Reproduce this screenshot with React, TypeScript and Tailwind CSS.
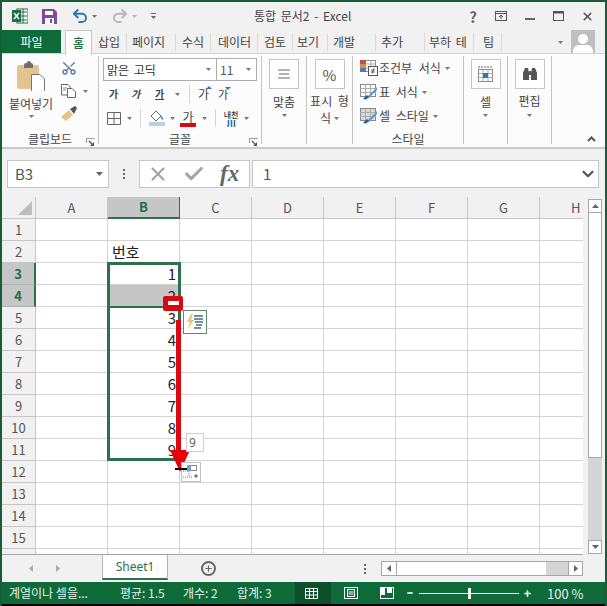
import React from "react";
import { Undo2, Redo2, Scissors, X, Check, ChevronDown, Minus, Plus } from "lucide-react";

const Caret = ({ c = "#666", w = 7, h = 4 }: { c?: string; w?: number; h?: number }) => (
  <svg width={w} height={h} viewBox="0 0 7 4" className="shrink-0"><polygon points="0,0 7,0 3.5,4" fill={c} /></svg>
);

const Launcher = () => (
  <svg width="9" height="9" viewBox="0 0 9 9" className="shrink-0">
    <path d="M0.5 5V0.5H8.5" fill="none" stroke="#999" />
    <path d="M3 3L7 7" stroke="#555" strokeWidth="1.2" />
    <path d="M8 4V8H4Z" fill="#555" />
  </svg>
);

const Group = ({ w, label, launcher, children }: { w: string; label?: string; launcher?: boolean; children: React.ReactNode }) => (
  <div className={`flex flex-col shrink-0 h-[88px] border-r border-[#c6c6c6] ${w}`}>
    <div className="h-[74px] flex shrink-0">{children}</div>
    <div className="flex h-[18px] shrink-0 items-center relative">
      <span className="flex-1 text-center text-[#444]">{label}</span>
      {launcher && <span className="absolute right-[3px] top-[8px]"><Launcher /></span>}
    </div>
  </div>
);

const BigBtn = ({ children }: { children: React.ReactNode }) => (
  <div className="w-[30px] h-[30px] bg-white border border-[#c6c6c6] flex items-center justify-center">{children}</div>
);

const LinesIcon = () => (
  <svg width="14" height="10" viewBox="0 0 14 10"><path d="M1 1H13M2 5H12M1 9H13" stroke="#666" strokeWidth="1" /></svg>
);

const StyleIcon = ({ n }: { n: number }) => (
  <svg width="18" height="16" viewBox="0 0 18 16" className="shrink-0">
    {n === 0 ? (
      <>
        <rect x="0.5" y="0.5" width="15" height="11" fill="#fff" stroke="#888" />
        <rect x="0" y="0" width="6" height="4" fill="#c0504d" />
        <rect x="0" y="4" width="6" height="4" fill="#e08a3c" />
        <rect x="0" y="8" width="6" height="4" fill="#4a7ebb" />
        <path d="M6 4H16M6 8H16M11 0V12" stroke="#aaa" />
        <rect x="8.5" y="6.5" width="9" height="9" fill="#fff" stroke="#555" />
        <path d="M11 10H15M11 12H15M14 8.5L12 13.5" stroke="#444" strokeWidth="0.8" />
      </>
    ) : (
      <>
        <rect x="0.5" y="0.5" width="15" height="12" fill={n === 1 ? "#fff" : "#d9d9d9"} stroke="#888" />
        <path d="M0 4.5H16M0 8.5H16M5.5 0V12M10.5 0V12" stroke="#aaa" />
        <path d="M17 3L8 12L5 15L9 14L17 6Z" fill="#5b9bd5" />
        <path d="M3 15L7 11L9 13L6 15.5Z" fill="#1f5f9f" />
      </>
    )}
  </svg>
);

const colsDef = [
  ["A", "w-[72px]"], ["B", "w-[72px]"], ["C", "w-[72px]"], ["D", "w-[72px]"],
  ["E", "w-[72px]"], ["F", "w-[72px]"], ["G", "w-[72px]"], ["H", "w-[44px]"],
] as const;

const rows = Array.from({ length: 15 }, (_, i) => i + 1);
const valueOf = (r: number) => (r >= 3 && r <= 11 ? String(r - 2) : "");

const tabs: [string, string][] = [
  ["삽입", "w-[34px] pl-[5px]"], ["페이지", "w-[49px] pl-[5px]"], ["수식", "w-[35px] pl-[6px]"], ["데이터", "w-[47px] pl-[7px]"], ["검토", "w-[35px] pl-[6px]"],
  ["보기", "w-[35px] pl-[4px]"], ["개발", "w-[48px] pl-[5px]"], ["추가", "w-[49px] pl-[5px]"], ["부하 테", "w-[49px] pl-[4px]"], ["팀", "w-[28px] pl-[9px]"],
];

export default function App() {
  return (
    <div
      className="relative w-[607px] h-[606px] overflow-hidden bg-[#f1f1f1] text-[12px] text-[#444] flex flex-col border-t-2 border-x-2 border-[#1a5c38] leading-none"
      style={{ fontFamily: '"Noto Sans CJK KR", "Noto Sans", sans-serif' }}
    >
      {/* Title bar */}
      <div className="h-[28px] flex items-center shrink-0 relative">
        <div className="flex items-center pl-[10px] gap-[14px]">
          <svg width="16" height="16" viewBox="0 0 16 16">
            <rect x="5" y="1" width="11" height="14" fill="#fff" stroke="#1d6f42" />
            <path d="M8 4H15M8 8H15M8 12H15M11 1V15" stroke="#1d6f42" />
            <rect x="0" y="2" width="9" height="12" fill="#1d6f42" />
            <path d="M2 5L7 11M7 5L2 11" stroke="#fff" strokeWidth="1.4" />
          </svg>
          <svg width="15" height="15" viewBox="0 0 15 15">
            <path d="M0 0H12L15 3V15H0Z" fill="#7d4a9e" />
            <rect x="3" y="2" width="8" height="4" fill="#fff" />
            <rect x="3" y="9" width="9" height="6" fill="#fff" />
            <rect x="8" y="10" width="2" height="4" fill="#7d4a9e" />
          </svg>
          <span className="flex items-center gap-[3px]">
            <Undo2 size={18} strokeWidth={2.6} color="#2f74b5" />
            <Caret c="#777" w={5} h={3} />
          </span>
          <span className="flex items-center gap-[3px]">
            <Redo2 size={18} strokeWidth={2.6} color="#b8b8b8" />
            <Caret c="#bbb" w={5} h={3} />
          </span>
          <span className="flex flex-col items-center gap-[2px]">
            <span className="w-[5px] h-[1px] bg-[#666]" />
            <Caret c="#666" w={5} h={3} />
          </span>
        </div>
        <div className="absolute left-[252px] top-[8px] text-[12px] whitespace-nowrap text-[#444] [word-spacing:2px]">통합 문서2 - Excel</div>
        <div className="ml-auto flex items-center pr-[3px] text-[#666]">
          <span className="w-[28px] text-center text-[15px] font-bold">?</span>
          <span className="w-[28px] flex justify-center">
            <svg width="12" height="10" viewBox="0 0 12 10"><rect x="0.5" y="0.5" width="11" height="9" fill="none" stroke="#555" /><path d="M0 2.5H12" stroke="#555" /><path d="M6 8V4M4 6L6 4L8 6" fill="none" stroke="#555" /></svg>
          </span>
          <span className="w-[29px] flex justify-center"><span className="w-[10px] h-[2px] bg-[#666] mt-[5px]" /></span>
          <span className="w-[29px] flex justify-center">
            <svg width="11" height="10" viewBox="0 0 11 10"><rect x="0.5" y="0.5" width="10" height="9" fill="none" stroke="#555" /><path d="M0 1.5H11" stroke="#555" strokeWidth="2" /></svg>
          </span>
          <span className="w-[29px] flex justify-center"><X size={13} strokeWidth={3} color="#555" /></span>
        </div>
      </div>

      {/* Tabs */}
      <div className="h-[24px] flex items-stretch shrink-0 relative">
        <div className="w-[59px] bg-[#0f6a3a] text-white flex items-center justify-center text-[12px]">파일</div>
        <div className="w-[4px]" />
        <div className="w-[27px] h-[25px] bg-[#fcfcfc] border-x border-t border-[#c6c6c6] flex items-center justify-center text-[#1d6f42] z-10 font-medium">홈</div>
        <div className="w-[1px]" />
        {tabs.map(([t, w]) => (
          <div key={t} className={`flex items-center justify-start whitespace-nowrap ${w} border-r border-[#d8d8d8] my-[3px] [word-spacing:2px]`}>{t}</div>
        ))}
        <div className="ml-auto flex items-center gap-[8px] pr-[10px]">
          <Caret c="#777" w={5} h={3} />
          <div className="w-[24px] h-[24px] bg-[#bfbfbf] flex flex-col items-center justify-end overflow-hidden">
            <span className="w-[10px] h-[10px] rounded-full bg-white mb-[1px]" />
            <span className="w-[20px] h-[9px] bg-white rounded-t-[6px]" />
          </div>
        </div>
        <div className="absolute left-0 right-0 bottom-0 h-px bg-[#d4d4d4]" />
      </div>

      {/* Ribbon */}
      <div className="h-[95px] shrink-0 bg-[#fcfcfc] border-b-2 border-[#c9c9c9] flex pt-[2px] relative">
        <Group w="w-[97px]" label="클립보드" launcher>
          <div className="w-[58px] flex flex-col items-center pt-[5px]">
            <svg width="28" height="30" viewBox="0 0 28 30">
              <rect x="0" y="4" width="22" height="24" rx="2" fill="#e2c48e" />
              <path d="M7 4C7 2 9 2 10 2C10 0 12 0 12 0C13 0 14 1 14 2C16 2 16 3 16 4V7H7Z" fill="#6e6e6e" />
              <path d="M14.5 13.5H23L27.5 18V30.5H14.5Z" fill="#fff" stroke="#777" />
            </svg>
            <span className="mt-[7px] whitespace-nowrap">붙여넣기</span>
            <span className="mt-[5px]"><Caret c="#777" w={5} h={3} /></span>
          </div>
          <div className="flex flex-col pt-[4px] pl-[1px] gap-[8px]">
            <Scissors size={16} color="#5a7a9a" className="rotate-[-90deg]" />
            <div className="flex items-center gap-[5px]">
              <svg width="15" height="14" viewBox="0 0 15 14"><path d="M0.5 0.5H7L9 2.5V11H0.5Z" fill="#fff" stroke="#666" /><path d="M6.5 4.5H11L14.5 8V13.5H6.5Z" fill="#fff" stroke="#666" /><path d="M2 4H6M2 6H5" stroke="#888" /></svg>
              <span className="ml-[2px]"><Caret c="#777" w={5} h={3} /></span>
            </div>
            <svg width="16" height="15" viewBox="0 0 16 15"><path d="M0 11L8 4L12 9L5 15Z" fill="#e3c48d" /><path d="M9 3L13 8L16 2L14 0Z" fill="#555" /></svg>
          </div>
        </Group>

        <Group w="w-[163px]" label="글꼴" launcher>
          <div className="flex flex-col pl-[4px] pt-[2px]">
            <div className="flex h-[23px]">
              <div className="w-[114px] bg-white border border-[#ababab] flex items-center pl-[3px] pr-[5px] justify-between text-[#333]">
                <span className="text-[12px] [word-spacing:2px]">맑은 고딕</span><Caret c="#777" w={5} h={3} />
              </div>
              <div className="w-[40px] bg-white border border-l-0 border-[#ababab] flex items-center pl-[3px] pr-[5px] justify-between text-[#555]">
                <span>11</span><Caret c="#777" w={5} h={3} />
              </div>
            </div>
            <div className="flex items-center h-[22px] mt-[2px] text-[10px] font-bold text-[#444]">
              <span className="w-[10px] ml-[6px]">가</span>
              <span className="w-[10px] ml-[12px] italic">가</span>
              <span className="w-[10px] ml-[14px] underline">가</span>
              <span className="ml-[10px]"><Caret c="#777" w={5} h={3} /></span>
              <span className="w-px h-[18px] bg-[#d4d4d4] ml-[9px]" />
              <span className="relative ml-[8px] text-[12px] font-normal">가<span className="absolute -right-[3px] -top-[2px] w-0 h-0 border-x-[3px] border-x-transparent border-b-[3px] border-b-[#2f74b5]" /></span>
              <span className="relative ml-[9px] text-[11px] font-normal">가<span className="absolute -right-[3px] -top-[2px] w-0 h-0 border-x-[3px] border-x-transparent border-t-[3px] border-t-[#2f74b5]" /></span>
            </div>
            <div className="flex items-center h-[22px] mt-[2px]">
              <svg width="14" height="13" viewBox="0 0 14 13" className="ml-[4px]"><path d="M0.5 0.5H13.5V12.5H0.5ZM0.5 6.5H13.5M7 0.5V12.5" fill="none" stroke="#666" /></svg>
              <span className="ml-[6px]"><Caret c="#777" w={5} h={3} /></span>
              <span className="w-px h-[18px] bg-[#d4d4d4] ml-[8px]" />
              <svg width="16" height="16" viewBox="0 0 16 16" className="ml-[8px]"><path d="M2 6L7 1L12 6L7 11Z" fill="#fff" stroke="#666" /><path d="M11 5L14 8V10L12 8Z" fill="#2f74b5" /><rect x="0" y="12" width="16" height="4" fill="#b8cfe4" /></svg>
              <span className="ml-[5px]"><Caret c="#777" w={5} h={3} /></span>
              <span className="ml-[5px] flex flex-col items-center w-[16px] text-[12px] leading-[13px]">가<span className="w-[16px] h-[4px] bg-[#d90a0f]" /></span>
              <span className="ml-[6px]"><Caret c="#777" w={5} h={3} /></span>
              <span className="w-px h-[18px] bg-[#d4d4d4] ml-[8px]" />
              <span className="ml-[7px] flex flex-col items-center w-[16px] text-[8px] leading-[9px] text-[#333] font-medium gap-[1px]">
                내천
                <svg width="9" height="7" viewBox="0 0 9 7" className="shrink-0"><path d="M1.500 0V5L0.500 7M4.500 0V7M7.500 0V7" fill="none" stroke="#2f74b5" strokeWidth="1.600" /></svg>
              </span>
              <span className="ml-[5px]"><Caret c="#777" w={5} h={3} /></span>
            </div>
          </div>
        </Group>

        <Group w="w-[45px]">
          <div className="flex-1 flex flex-col items-center pt-[3px]">
            <BigBtn><LinesIcon /></BigBtn>
            <span className="mt-[7px]">맞춤</span>
            <span className="mt-[6px]"><Caret c="#777" w={5} h={3} /></span>
          </div>
        </Group>

        <Group w="w-[46px]">
          <div className="flex-1 flex flex-col items-center pt-[3px]">
            <BigBtn><span className="text-[15px] text-[#555]">%</span></BigBtn>
            <span className="mt-[6px] whitespace-nowrap [word-spacing:3px]">표시 형</span>
            <span className="mt-[5px] flex items-center gap-[3px]">식<Caret c="#777" w={5} h={3} /></span>
          </div>
        </Group>

        <Group w="w-[111px]" label="스타일">
          <div className="flex flex-col pl-[7px] pt-[3px] gap-[6px]">
            <div className="flex items-center gap-[1px] h-[18px] whitespace-nowrap [word-spacing:4px]"><StyleIcon n={0} />조건부 서식<span className="ml-[3px]"><Caret c="#777" w={5} h={3} /></span></div>
            <div className="flex items-center gap-[1px] h-[18px] whitespace-nowrap [word-spacing:3px]"><StyleIcon n={1} />표 서식<span className="ml-[3px]"><Caret c="#777" w={5} h={3} /></span></div>
            <div className="flex items-center gap-[1px] h-[18px] whitespace-nowrap [word-spacing:3px]"><StyleIcon n={2} />셀 스타일<span className="ml-[3px]"><Caret c="#777" w={5} h={3} /></span></div>
          </div>
        </Group>

        <Group w="w-[44px]">
          <div className="flex-1 flex flex-col items-center pt-[3px]">
            <BigBtn>
              <svg width="15" height="16" viewBox="0 0 15 16"><path d="M0 1H15" stroke="#666" strokeDasharray="2 1" /><rect x="0.5" y="3.5" width="14" height="12" fill="#fff" stroke="#888" /><path d="M0 7.5H15M0 11.5H15M5 3V16M10 3V16" stroke="#aaa" /><rect x="5" y="7" width="5" height="5" fill="#2f74b5" /></svg>
            </BigBtn>
            <span className="mt-[7px]">셀</span>
            <span className="mt-[6px]"><Caret c="#777" w={5} h={3} /></span>
          </div>
        </Group>

        <Group w="w-[44px]">
          <div className="flex-1 flex flex-col items-center pt-[3px]">
            <BigBtn>
              <svg width="16" height="14" viewBox="0 0 16 14"><path d="M1 6L3 1H6L7 6V13H1ZM9 6L10 1H13L15 6V13H9ZM7 4H9V8H7Z" fill="#555" /></svg>
            </BigBtn>
            <span className="mt-[6px]">편집</span>
            <span className="mt-[7px]"><Caret c="#777" w={5} h={3} /></span>
          </div>
        </Group>
        <span className="absolute right-[9px] bottom-[5px]">
          <svg width="9" height="6" viewBox="0 0 9 6"><path d="M1 5L4.500 1.500L8 5" fill="none" stroke="#555" strokeWidth="2" /></svg>
        </span>
      </div>

      {/* Formula bar */}
      <div className="h-[48px] shrink-0 flex items-center pl-[5px] pr-[6px] pt-[1px]">
        <div className="w-[102px] h-[28px] bg-white border border-[#c6c6c6] flex items-center justify-between pl-[7px] pr-[5px] text-[15px] text-[#555]">
          <span>B3</span><Caret c="#666" w={7} h={4} />
        </div>
        <div className="w-[30px] flex flex-col items-center gap-[2px]">
          <span className="w-[2px] h-[2px] bg-[#666]" /><span className="w-[2px] h-[2px] bg-[#666]" /><span className="w-[2px] h-[2px] bg-[#666]" />
        </div>
        <div className="w-[111px] h-[28px] bg-white border border-[#c6c6c6] flex items-center pl-[7px]">
          <X size={22} strokeWidth={2.4} color="#a6a6a6" />
          <Check size={22} strokeWidth={3.4} color="#a6a6a6" className="ml-[14px]" />
          <span className="ml-[15px] text-[#666] text-[23px] font-bold italic" style={{ fontFamily: '"Liberation Serif", serif' }}>fx</span>
        </div>
        <div className="ml-[2px] flex-1 h-[28px] bg-white border border-[#c6c6c6] flex items-center justify-between pl-[10px] pr-[1px] text-[15px] text-[#555]">
          <span>1</span><ChevronDown size={18} strokeWidth={3} color="#555" />
        </div>
      </div>

      {/* Sheet area */}
      <div className="h-[358px] shrink-0 flex overflow-hidden">
        <div className="w-[581px] shrink-0 flex flex-col overflow-hidden border-b border-[#a6a6a6] h-[358px]">
          <div className="flex h-[22px] shrink-0">
            <div className="w-[34px] shrink-0 border-r border-[#c6c6c6] border-b flex items-end justify-end pr-[3px] pb-[3px]">
              <svg width="14" height="14" viewBox="0 0 14 14"><polygon points="14,0 14,14 0,14" fill="#bdbdbd" /></svg>
            </div>
            {colsDef.map(([c, w]) => (
              <div key={c} className={`${w} shrink-0 flex items-center text-[13px] pb-[1px] border-r ${c === "H" ? "justify-start pl-[31px]" : "justify-center"} ${c === "B" ? "bg-[#c6c6c6] text-[#1d6f42] font-semibold border-b-2 border-[#2e6f4e]" : "border-[#c6c6c6] border-b text-[#555]"}`}>{c}</div>
            ))}
          </div>
          {rows.map((r) => (
            <div key={r} className="flex h-[22px] shrink-0">
              <div className={`w-[34px] shrink-0 flex items-center justify-center text-[13px] ${r === 3 || r === 4 ? "bg-[#c6c6c6] text-[#1d6f42] font-semibold border-r-2 border-[#2e6f4e] border-b border-b-[#b0b0b0]" : "border-r border-b border-[#c6c6c6] text-[#555]"}`}>{r}</div>
              {colsDef.map(([c, w]) => (
                <div key={c} className={`${w} shrink-0 border-r border-b border-[#d4d4d4] flex items-center text-[15px] text-[#222] ${c === "B" && r === 4 ? "bg-[#c6c6c6]" : "bg-white"} ${c === "B" && r === 2 ? "pl-[4px]" : "justify-end pr-[3px]"}`}>
                  {c === "B" ? (r === 2 ? "번호" : valueOf(r)) : ""}
                </div>
              ))}
            </div>
          ))}
          <div className="flex h-[6px] shrink-0">
            <div className="w-[34px] shrink-0 border-r border-[#c6c6c6]" />
            {colsDef.map(([c, w]) => <div key={c} className={`${w} shrink-0 bg-white border-r border-[#d4d4d4]`} />)}
          </div>
        </div>
        {/* vertical scrollbar */}
        <div className="ml-[5px] mt-[2px] w-[14px] h-[355px] flex flex-col">
          <div className="h-[14px] shrink-0 bg-white border border-[#a6a6a6] flex items-center justify-center"><svg width="7" height="4" viewBox="0 0 7 4"><polygon points="0,4 7,4 3.500,0" fill="#666" /></svg></div>
          <div className="h-[245px] shrink-0 bg-white border-x border-b border-[#a6a6a6]" />
          <div className="flex-1 bg-[#d4d4d4]" />
          <div className="h-[14px] shrink-0 bg-white border border-[#a6a6a6] flex items-center justify-center"><Caret c="#666" /></div>
        </div>
      </div>

      {/* Sheet tabs */}
      <div className="h-[27px] shrink-0 flex items-start">
        <div className="w-[100px] h-[27px] flex items-center pl-[27px] gap-[23px]">
          <svg width="4" height="7" viewBox="0 0 4 7"><polygon points="4,0 4,7 0,3.500" fill="#aaa" /></svg>
          <svg width="4" height="7" viewBox="0 0 4 7"><polygon points="0,0 0,7 4,3.500" fill="#aaa" /></svg>
        </div>
        <div className="w-[66px] h-[25px] bg-white border-x border-[#b5b5b5] border-b-2 border-b-[#2e6f4e] flex items-center justify-center text-[12px] text-[#2e6f4e]" style={{ fontFamily: '"Noto Sans", sans-serif' }}>Sheet1</div>
        <div className="ml-[33px] h-[27px] flex items-center">
          <span className="w-[15px] h-[15px] rounded-full border-2 border-[#666] flex items-center justify-center"><Plus size={9} strokeWidth={3} color="#666" /></span>
        </div>
        <div className="ml-[148px] h-[27px] flex flex-col items-center justify-center gap-[2px]">
          <span className="w-[2px] h-[2px] bg-[#666]" /><span className="w-[2px] h-[2px] bg-[#666]" /><span className="w-[2px] h-[2px] bg-[#666]" />
        </div>
        <div className="ml-[15px] mt-[6px] w-[202px] h-[15px] flex border border-[#a6a6a6] bg-white">
          <div className="w-[15px] flex items-center justify-center border-r border-[#a6a6a6]"><svg width="4" height="7" viewBox="0 0 4 7"><polygon points="4,0 4,7 0,3.500" fill="#666" /></svg></div>
          <div className="w-[149px] bg-white" />
          <div className="w-[22px] bg-[#d4d4d4]" />
          <div className="flex-1 flex items-center justify-center border-l border-[#a6a6a6]"><svg width="4" height="7" viewBox="0 0 4 7"><polygon points="0,0 0,7 4,3.500" fill="#666" /></svg></div>
        </div>
      </div>

      {/* Status bar */}
      <div className="h-[22px] shrink-0 bg-[#0f6a3a] text-[#e4efe8] flex items-center text-[12px]">
        <span className="w-[118px] pl-[7px] whitespace-nowrap">계열이나 셀을...</span>
        <span className="w-[63px]">평균: 1.5</span>
        <span className="w-[54px]">개수: 2</span>
        <span className="w-[58px]">합계: 3</span>
        <div className="w-[36px] h-full bg-[#0b4f2b] flex items-center justify-center pr-[4px]">
          <svg width="13" height="11" viewBox="0 0 13 11"><path d="M0.5 0.5H12.5V10.5H0.5ZM0.5 3.500H12.5M0.5 7H12.5M4.500 0.500V10.500M8.500 0.500V10.500" fill="none" stroke="#fff" /></svg>
        </div>
        <div className="w-[39px] flex justify-center">
          <svg width="14" height="12" viewBox="0 0 14 12"><rect x="0.5" y="0.5" width="13" height="11" fill="none" stroke="#fff" /><rect x="3.500" y="2.500" width="7" height="7" fill="none" stroke="#fff" /><path d="M4.500 5H9.500M4.500 7H9.500" stroke="#fff" /></svg>
        </div>
        <div className="w-[33px] flex justify-center">
          <svg width="14" height="12" viewBox="0 0 14 12"><rect x="0.5" y="0.5" width="13" height="11" fill="none" stroke="#fff" /><rect x="1" y="0" width="4" height="8" fill="#fff" /><rect x="7" y="0" width="5" height="6" fill="#fff" /></svg>
        </div>
        <Minus size={8} strokeWidth={4} color="#fff" className="ml-[3px]" />
        <div className="ml-[5px] w-[100px] h-px bg-white relative"><span className="absolute left-[49px] -top-[5px] w-[3px] h-[11px] bg-white" /></div>
        <Plus size={9} strokeWidth={4} color="#fff" className="ml-[4px]" />
        <span className="ml-[15px] whitespace-nowrap text-[13px]">100 %</span>
      </div>
      <div className="absolute left-[-2px] right-[-2px] bottom-0 h-[2px] bg-black" />

      {/* Overlays */}
      <div className="absolute left-[105px] top-[260px] w-[74px] h-[199px] border-[3px] border-[#2e6f4e] pointer-events-none" />
      <div className="absolute left-[105px] top-[304px] w-[74px] h-[2px] bg-[#2e6f4e]" />
      <div className="absolute left-[161px] top-[294px] w-[20px] h-[15px] rounded-[2px] bg-[#d90a0f] flex items-center justify-center">
        <span className="w-[11px] h-[5px] bg-white border-b border-[#444]" />
      </div>
      <div className="absolute left-[181px] top-[308px] w-[24px] h-[24px] bg-white border border-[#5d8a72] flex items-center justify-center">
        <svg width="18" height="16" viewBox="0 0 18 16"><path d="M5 0L1 8H4L2 15L8 6H5L7 0Z" fill="#e8c37a" /><path d="M8 2H17M8 5H17M9 8H17M10 11H16M8 14H15" stroke="#4a6a7a" strokeWidth="1.4" /></svg>
      </div>
      <svg width="26" height="156" viewBox="0 0 26 156" className="absolute left-[164px] top-[318px]">
        <rect x="10" y="0" width="5" height="134" fill="#d90a0f" />
        <polygon points="4,130 24,130 14,152" fill="#e5000c" />
      </svg>
      <div className="absolute left-[184px] top-[431px] w-[18px] h-[19px] bg-white border border-[#d0d0d0] text-[12px] text-[#666] flex items-center pl-[2px]" style={{ fontFamily: '"Noto Sans", sans-serif' }}>9</div>
      <div className="absolute left-[179px] top-[460px] w-[20px] h-[20px] bg-white border border-[#c0c0c0] flex items-center justify-center">
        <svg width="16" height="14" viewBox="0 0 16 14"><rect x="4.500" y="0.500" width="9" height="5" fill="none" stroke="#888" /><rect x="4" y="0" width="4" height="6" fill="#6d9eca" /><path d="M0 6H6V12" fill="none" stroke="#777" strokeDasharray="1 1" /><path d="M0 12H9" stroke="#777" strokeDasharray="1 1" /><path d="M13 9V13M11 11H15" stroke="#555" /></svg>
      </div>
      <div className="absolute left-[173px] top-[466px] w-[12px] h-[2px] bg-black" />
    </div>
  );
}
